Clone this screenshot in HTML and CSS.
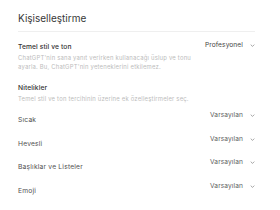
FILE: index.html
```html
<!DOCTYPE html>
<html lang="tr">
<head>
<meta charset="utf-8">
<link rel="stylesheet" href="styles.css">
</head>
<body>
<div class="page">
  <h1 class="title">Kişiselleştirme</h1>
  <div class="divider"></div>
  <div class="row top">
    <div class="info">
      <div class="label strong">Temel stil ve ton</div>
      <div class="desc">ChatGPT'nin sana yanıt verirken kullanacağı üslup ve tonu ayarla. Bu, ChatGPT'nin yeteneklerini etkilemez.</div>
    </div>
    <div class="value strongv">Profesyonel <svg class="chev" viewBox="0 0 8 5"><path d="M1 1l3 3 3-3"/></svg></div>
  </div>
  <div class="section">
    <div class="label strong">Nitelikler</div>
    <div class="desc">Temel stil ve ton tercihinin üzerine ek özelleştirmeler seç.</div>
  </div>
  <div class="list">
    <div class="row item"><div class="label">Sıcak</div><div class="value">Varsayılan <svg class="chev" viewBox="0 0 8 5"><path d="M1 1l3 3 3-3"/></svg></div></div>
    <div class="row item"><div class="label">Hevesli</div><div class="value">Varsayılan <svg class="chev" viewBox="0 0 8 5"><path d="M1 1l3 3 3-3"/></svg></div></div>
    <div class="row item"><div class="label">Başlıklar ve Listeler</div><div class="value">Varsayılan <svg class="chev" viewBox="0 0 8 5"><path d="M1 1l3 3 3-3"/></svg></div></div>
    <div class="row item"><div class="label">Emoji</div><div class="value">Varsayılan <svg class="chev" viewBox="0 0 8 5"><path d="M1 1l3 3 3-3"/></svg></div></div>
  </div>
</div>
</body>
</html>
```
FILE: styles.css
```css
html, body { margin: 0; padding: 0; background: #fff; }
body { font-family: Inter, "Noto Sans", sans-serif; color: #333; }
.page { padding: 11px 25px 0 18px; }
.title { font-size: 10px; font-weight: 400; margin: 0; line-height: 14px; color: #383838; }
.divider { height: 1px; background: #efefef; margin-top: 6px; }
.row { display: flex; justify-content: space-between; align-items: flex-start; }
.top { margin-top: 11px; }
.info { width: 178px; }
.label { font-size: 6.7px; line-height: 9px; letter-spacing: 0.2px; color: #505050; }
.label.strong { font-weight: 500; color: #333; letter-spacing: 0.1px; }
.desc { font-size: 5.9px; line-height: 9px; letter-spacing: 0.2px; color: #bcbcbc; margin-top: 1px; }
.value { display: flex; align-items: center; gap: 7px; font-size: 6.6px; line-height: 9px; letter-spacing: 0.1px; color: #606060; }
.value.strongv { color: #444; margin-top: -2px; }
.chev { width: 5px; height: 3px; fill: none; stroke: #777; stroke-width: 1.1; }
.section { margin-top: 13px; }
.list { margin-top: 12px; display: flex; flex-direction: column; gap: 13.5px; }
.item .value { margin-top: -4px; }
.item .label { margin-top: 1px; }
```
